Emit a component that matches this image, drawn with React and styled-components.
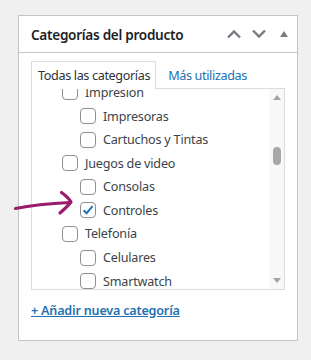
import React from 'react';
import styled, { createGlobalStyle } from 'styled-components';

const categories = [
  { id: 1, name: 'Impresion', level: 1 },
  { id: 2, name: 'Impresoras', level: 2 },
  { id: 3, name: 'Cartuchos y Tintas', level: 2 },
  { id: 4, name: 'Juegos de video', level: 1 },
  { id: 5, name: 'Consolas', level: 2 },
  { id: 6, name: 'Controles', level: 2, checked: true },
  { id: 7, name: 'Telefonía', level: 1 },
  { id: 8, name: 'Celulares', level: 2 },
  { id: 9, name: 'Smartwatch', level: 2 },
];

function App() {
  return (
    <>
      <GlobalStyle />
      <Page>
        <Panel>
          <Header>
            <Title>Categorías del producto</Title>
            <HeaderActions>
              <IconButton type="button" aria-label="Subir">
                <svg width="16" height="10" viewBox="0 0 16 10">
                  <path d="M2 8.5 L8 2.5 L14 8.5" fill="none" stroke="#787c82" strokeWidth="2.4" />
                </svg>
              </IconButton>
              <IconButton type="button" aria-label="Bajar">
                <svg width="16" height="10" viewBox="0 0 16 10">
                  <path d="M2 1.5 L8 7.5 L14 1.5" fill="none" stroke="#787c82" strokeWidth="2.4" />
                </svg>
              </IconButton>
              <ToggleButton type="button" aria-label="Cerrar panel">
                <svg width="8" height="6" viewBox="0 0 8 6">
                  <path d="M0 6 L4 0 L8 6 Z" fill="#787c82" />
                </svg>
              </ToggleButton>
            </HeaderActions>
          </Header>
          <Body>
            <Tabs>
              <Tab $active>Todas las categorías</Tab>
              <Tab>Más utilizadas</Tab>
            </Tabs>
            <ListBox>
              <ListViewport>
                <CategoryList>
                  {categories.map((item) => (
                    <CategoryItem key={item.id} $level={item.level}>
                      <Checkbox $checked={item.checked}>
                        {item.checked && (
                          <svg width="14" height="14" viewBox="0 0 14 14">
                            <path d="M2.6 7.2 L5.6 10.2 L11.6 3.2" fill="none" stroke="#2271b1" strokeWidth="2" />
                          </svg>
                        )}
                      </Checkbox>
                      <Label>{item.name}</Label>
                    </CategoryItem>
                  ))}
                </CategoryList>
              </ListViewport>
              <ScrollBar>
                <ScrollArrow $dir="up" />
                <ScrollTrack>
                  <ScrollThumb />
                </ScrollTrack>
                <ScrollArrow $dir="down" />
              </ScrollBar>
            </ListBox>
            <AddLink href="#">+ Añadir nueva categoría</AddLink>
          </Body>
        </Panel>
        <Annotation width="311" height="360" viewBox="0 0 311 360">
          <path
            d="M15.5 208.5 C30 205.5 48 203.5 70 202.5"
            fill="none"
            stroke="#9b1c6c"
            strokeWidth="3.2"
            strokeLinecap="round"
          />
          <path
            d="M61.5 192.5 C65 195 69 198.5 71 202 C68 206 64 209.5 60 213"
            fill="none"
            stroke="#9b1c6c"
            strokeWidth="3.2"
            strokeLinecap="round"
            strokeLinejoin="round"
          />
        </Annotation>
      </Page>
    </>
  );
}

export default App;

const GlobalStyle = createGlobalStyle`
  body {
    margin: 0;
    background: #f0f0f1;
    font-family: "Noto Sans", "Open Sans", sans-serif;
    color: #3c434a;
  }
`;

const Page = styled.div`
  position: relative;
  width: 311px;
  height: 360px;
  padding: 15px 0 0 18px;
  box-sizing: border-box;
`;

const Panel = styled.div`
  width: 280px;
  height: 326px;
  box-sizing: border-box;
  background: #fff;
  border: 1px solid #c3c4c7;
`;

const Header = styled.div`
  display: flex;
  align-items: center;
  height: 36px;
  padding-left: 12px;
  border-bottom: 1px solid #c3c4c7;
`;

const Title = styled.h2`
  flex: 1;
  margin: 0;
  font-size: 13.6px;
  font-weight: 600;
  color: #1d2327;
  letter-spacing: -0.3px;
`;

const HeaderActions = styled.div`
  display: flex;
  align-items: center;
  padding-right: 3px;
`;

const IconButton = styled.button`
  display: flex;
  align-items: center;
  justify-content: center;
  width: 24px;
  height: 36px;
  padding: 0;
  margin-left: 1px;
  border: none;
  background: transparent;
  cursor: pointer;
`;

const ToggleButton = styled(IconButton)`
  width: 20px;
  margin-left: 3px;
`;

const Body = styled.div`
  padding: 8px 12px 12px;
`;

const Tabs = styled.div`
  display: flex;
  align-items: flex-end;
  position: relative;
  z-index: 1;
`;

const Tab = styled.div`
  box-sizing: border-box;
  padding: 2px 5px 0 6px;
  margin-right: ${(props) => (props.$active ? '5px' : '0')};
  font-size: 12.6px;
  line-height: 24px;
  letter-spacing: -0.35px;
  color: ${(props) => (props.$active ? '#2c3338' : '#2271b1')};
  background: ${(props) => (props.$active ? '#fff' : 'transparent')};
  border: 1px solid ${(props) => (props.$active ? '#dcdcde' : 'transparent')};
  border-bottom: none;
  margin-bottom: ${(props) => (props.$active ? '-1px' : '0')};
  height: ${(props) => (props.$active ? '28px' : '27px')};
  cursor: pointer;
`;

const ListBox = styled.div`
  display: flex;
  height: 202px;
  border: 1px solid #dcdcde;
  box-sizing: border-box;
  background: #fff;
`;

const ListViewport = styled.div`
  flex: 1;
  overflow: hidden;
`;

const CategoryList = styled.ul`
  list-style: none;
  margin: -8.4px 0 0;
  padding: 0;
`;

const CategoryItem = styled.li`
  display: flex;
  align-items: center;
  height: 23.6px;
  padding-left: ${(props) => (props.$level === 1 ? '30px' : '48px')};
`;

const Checkbox = styled.span`
  display: flex;
  align-items: center;
  justify-content: center;
  flex: none;
  width: 16px;
  height: 16px;
  box-sizing: border-box;
  border: 1px solid #8c8f94;
  border-radius: 4px;
  background: #fff;
`;

const Label = styled.span`
  margin-left: 7px;
  font-size: 12.6px;
  letter-spacing: -0.2px;
  color: #3c434a;
`;

const ScrollBar = styled.div`
  display: flex;
  flex-direction: column;
  width: 15px;
  background: #f8f8f8;
`;

const ScrollArrow = styled.div`
  display: flex;
  align-items: center;
  justify-content: center;
  height: 17px;
  &::before {
    content: '';
    width: 0;
    height: 0;
    border-left: 4.5px solid transparent;
    border-right: 4.5px solid transparent;
    ${(props) =>
      props.$dir === 'up'
        ? 'border-bottom: 5px solid #a3a3a3;'
        : 'border-top: 5px solid #a3a3a3;'}
  }
`;

const ScrollTrack = styled.div`
  flex: 1;
  display: flex;
  justify-content: center;
  padding-top: 41px;
`;

const ScrollThumb = styled.div`
  width: 8px;
  height: 18px;
  border-radius: 4px;
  background: #a8a8a8;
`;

const AddLink = styled.a`
  display: inline-block;
  margin-top: 12px;
  font-size: 12.6px;
  font-weight: 600;
  letter-spacing: -0.2px;
  color: #2271b1;
  text-decoration: underline;
`;

const Annotation = styled.svg`
  position: absolute;
  left: 0;
  top: 0;
  pointer-events: none;
`;
